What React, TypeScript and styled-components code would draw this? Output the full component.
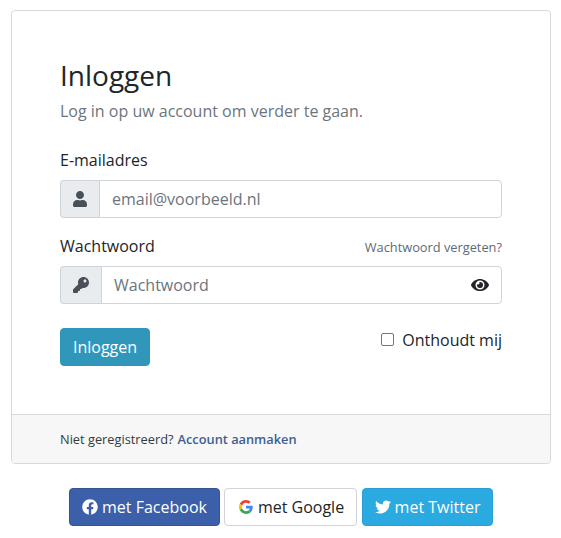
import React from "react";
import styled, { createGlobalStyle } from "styled-components";
import { FaUser, FaKey, FaEye, FaFacebook, FaTwitter } from "react-icons/fa";

const Global = createGlobalStyle`
  html, body { margin: 0; padding: 0; background: #fff; }
  * { box-sizing: border-box; }
  body { font-family: "Open Sans", sans-serif; color: #212529; }
`;
const Page = styled.div`
  width: 561px; height: 538px; padding: 10px 10px 0 11px; overflow: hidden;
`;
const Card = styled.div`
  width: 540px; height: 454px; border: 1px solid #d9d9d9; border-radius: 4px;
  display: flex; flex-direction: column; background: #fff; overflow: hidden;
`;
const Body = styled.div`
  flex: 1; padding: 47px 48px 0 48px;
`;
const Title = styled.h1`
  margin: 0; font-size: 28px; line-height: 34px; font-weight: 400; color: #212529;
`;
const Lead = styled.p`
  margin: 7px 0 0; font-size: 16px; line-height: 24px; color: #6c757d;
`;
const LabelRow = styled.div<{ $top: number }>`
  display: flex; justify-content: space-between; align-items: baseline;
  margin-top: ${p => p.$top}px;
`;
const Label = styled.label`
  font-size: 16px; line-height: 24px; color: #212529;
`;
const Forgot = styled.a`
  font-size: 12.8px; color: #5f6a74;
`;
const Group = styled.div`
  display: flex; height: 38px; margin-top: 8px; width: 442px;
`;
const Addon = styled.div<{ $w: number }>`
  width: ${p => p.$w}px; background: #e9ecef; border: 1px solid #ced4da; border-right: 0;
  border-radius: 4px 0 0 4px; display: flex; align-items: center; justify-content: center;
  color: #495057; font-size: 16px;
`;
const Field = styled.div`
  flex: 1; border: 1px solid #ced4da; border-radius: 0 4px 4px 0; display: flex;
  align-items: center; justify-content: space-between; padding: 0 12px;
  font-size: 16px; color: #6c757d; background: #fff;
`;
const EyeBtn = styled.span`
  display: flex; color: #212529; font-size: 18px;
`;
const Actions = styled.div`
  display: flex; justify-content: space-between; margin-top: 24px; width: 442px;
`;
const Submit = styled.button`
  width: 90px; height: 38px; border: 1px solid #2e96b8; border-radius: 4px; background: #3097bb;
  color: #fff; font: 400 16px "Open Sans", sans-serif; padding: 0;
`;
const Remember = styled.label`
  display: flex; align-items: center; gap: 8px; font-size: 16px; height: 24px; color: #212529;
`;
const Box = styled.span`
  width: 13px; height: 13px; border: 1px solid #767676; border-radius: 2px; background: #fff;
  margin-top: -1px;
`;
const Footer = styled.div`
  height: 49px; background: #f7f7f7; border-top: 1px solid #d9d9d9; padding: 0 48px;
  display: flex; align-items: center; font-size: 12.8px; color: #343a40; gap: 4px;
`;
const Strong = styled.a`
  font-weight: 600; color: #3b5f94;
`;
const Socials = styled.div`
  display: flex; justify-content: center; gap: 4px; margin-top: 24px;
`;
const Social = styled.div<{ $bg: string; $fg: string; $bd: string; $w: number; $after?: number }>`
  width: ${p => p.$w}px; height: 38px; border-radius: 4px; background: ${p => p.$bg}; color: ${p => p.$fg};
  border: 1px solid ${p => p.$bd}; display: flex; align-items: center; justify-content: center; gap: 4px;
  font-size: 16px; margin-right: ${p => p.$after ?? 0}px;
`;
const GoogleMark = styled.svg`
  width: 14px; height: 14px; margin: 0 1px 0 2px;
`;
const G = () => (
  <GoogleMark viewBox="0 0 48 48">
    <path fill="#EA4335" d="M24 9.5c3.500 0 6.700 1.200 9.200 3.600l6.900-6.900C35.900 2.400 30.400 0 24 0 14.600 0 6.500 5.400 2.600 13.200l8 6.200C12.400 13.700 17.700 9.500 24 9.500z"/>
    <path fill="#4285F4" d="M46.900 24.500c0-1.600-.1-3.100-.4-4.500H24v9h12.900c-.6 3-2.200 5.500-4.700 7.200l7.700 6c4.500-4.200 7-10.300 7-17.700z"/>
    <path fill="#FBBC05" d="M10.500 28.600c-.5-1.400-.8-3-.8-4.600s.3-3.200.8-4.600l-8-6.200C.9 16.500 0 20.100 0 24s.9 7.500 2.600 10.800l7.900-6.200z"/>
    <path fill="#34A853" d="M24 48c6.500 0 11.900-2.100 15.900-5.800l-7.700-6c-2.100 1.400-4.900 2.300-8.200 2.300-6.300 0-11.600-4.200-13.500-10l-8 6.200C6.500 42.600 14.600 48 24 48z"/>
  </GoogleMark>
);

export default function App() {
  return (
    <Page>
      <Global />
      <Card>
        <Body>
          <Title>Inloggen</Title>
          <Lead>Log in op uw account om verder te gaan.</Lead>
          <LabelRow $top={25}><Label>E-mailadres</Label></LabelRow>
          <Group>
            <Addon $w={39}><FaUser size={16} /></Addon>
            <Field>email@voorbeeld.nl</Field>
          </Group>
          <LabelRow $top={16}><Label>Wachtwoord</Label><Forgot>Wachtwoord vergeten?</Forgot></LabelRow>
          <Group>
            <Addon $w={41}><FaKey size={16} /></Addon>
            <Field>Wachtwoord<EyeBtn><FaEye /></EyeBtn></Field>
          </Group>
          <Actions>
            <Submit>Inloggen</Submit>
            <Remember><Box />Onthoudt mij</Remember>
          </Actions>
        </Body>
        <Footer>Niet geregistreerd? <Strong>Account aanmaken</Strong></Footer>
      </Card>
      <Socials>
        <Social $bg="#3b5fa8" $fg="#fff" $bd="#35558f" $w={151}><FaFacebook size={16} />met Facebook</Social>
        <Social $bg="#fff" $fg="#212529" $bd="#ced4da" $w={133} $after={1}><G />met Google</Social>
        <Social $bg="#2ba9e1" $fg="#fff" $bd="#2a9fd3" $w={131}><FaTwitter size={16} />met Twitter</Social>
      </Socials>
    </Page>
  );
}
